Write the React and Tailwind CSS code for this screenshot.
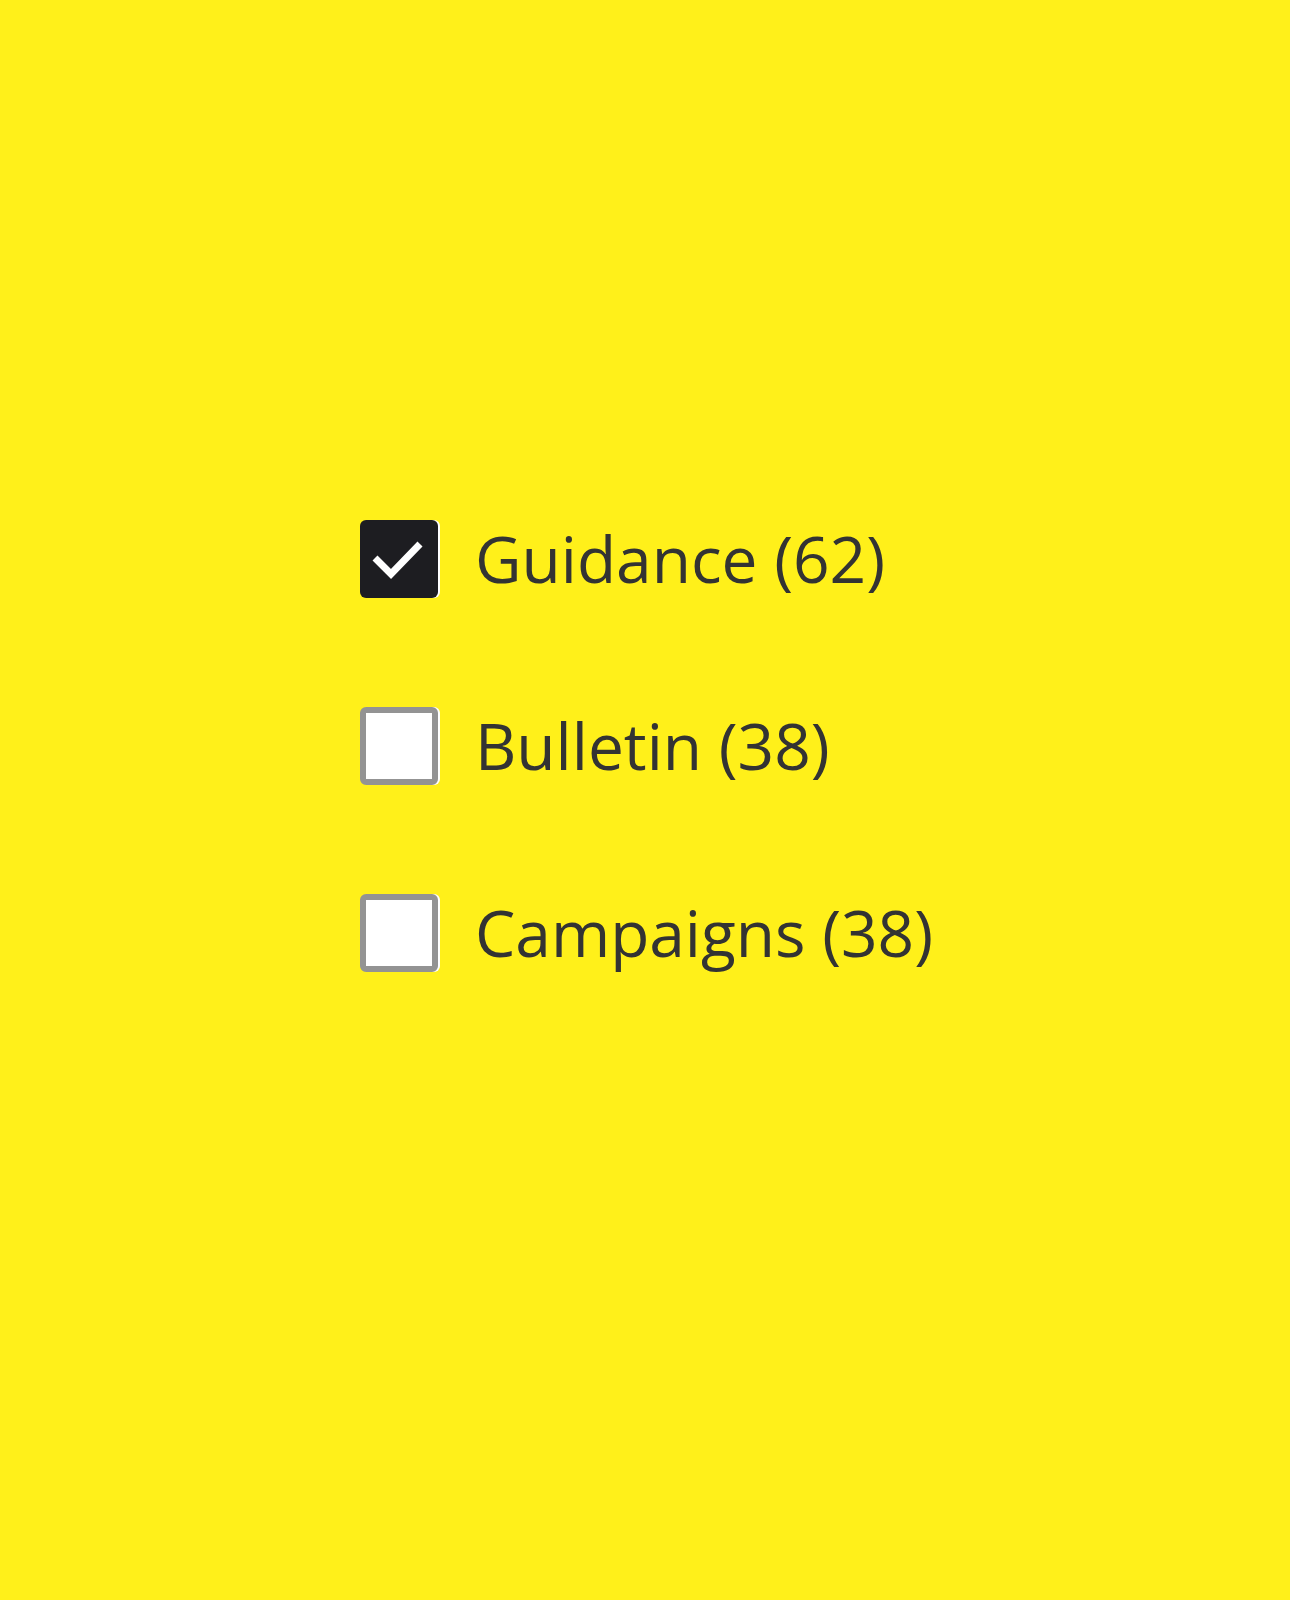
import React from 'react';

const items = [
  { label: 'Guidance (62)', checked: true },
  { label: 'Bulletin (38)', checked: false },
  { label: 'Campaigns (38)', checked: false },
];

const Box = ({ checked }) =>
  checked ? (
    <span className="block h-[78px] w-[78px] shrink-0 rounded-[6px] bg-[#1d1d21] shadow-[2px_0_0_#ffffff]">
      <svg width="78" height="78" viewBox="0 0 78 78" fill="none">
        <path d="M15 38l16 16 29-30" stroke="#ffffff" strokeWidth="7" />
      </svg>
    </span>
  ) : (
    <span className="block h-[78px] w-[78px] shrink-0 rounded-[6px] border-[6px] border-[#939393] bg-white shadow-[2px_0_0_#ffffff]" />
  );

export default function App() {
  return (
    <div className="min-h-[1600px] w-full bg-[#fff01a] pl-[360px] pt-[520px] font-['Open_Sans',sans-serif]">
      <div className="flex flex-col gap-[109px]">
        {items.map((it) => (
          <label key={it.label} className="flex items-center gap-[37px]">
            <Box checked={it.checked} />
            <span className="text-[64px] leading-none text-[#333333]">{it.label}</span>
          </label>
        ))}
      </div>
    </div>
  );
}
